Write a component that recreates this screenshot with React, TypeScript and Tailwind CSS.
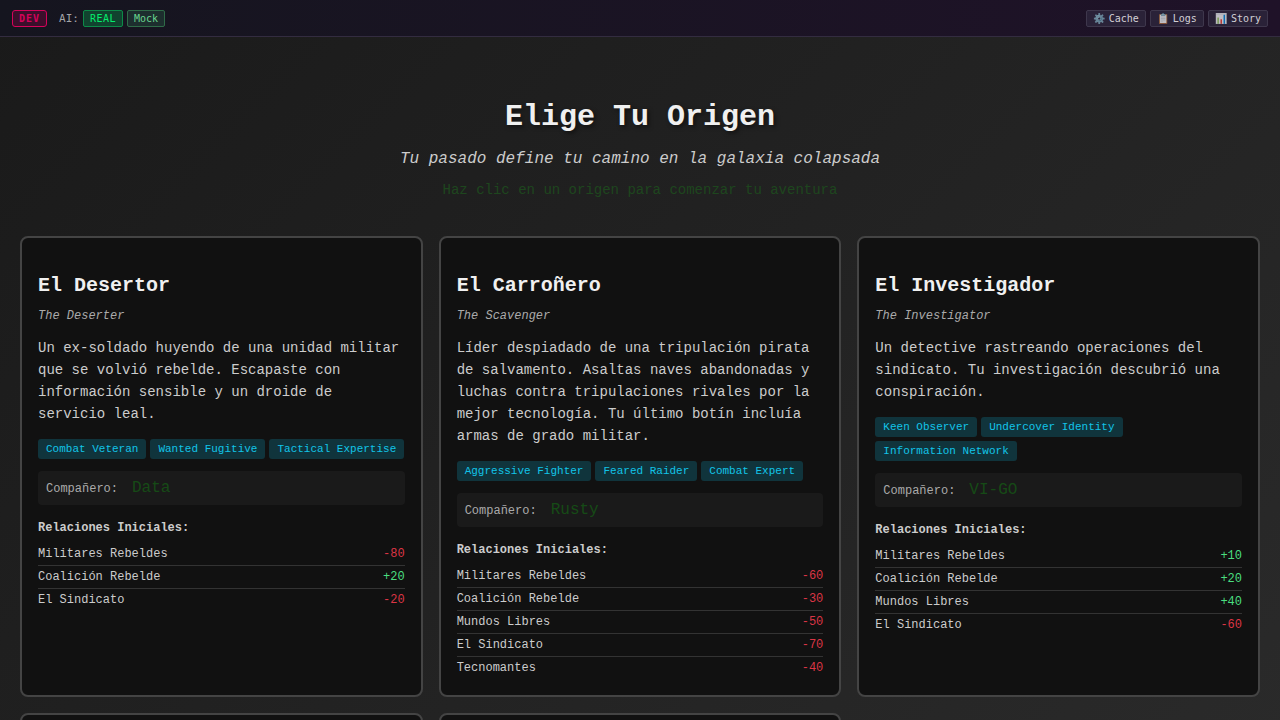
type Relation = { faction: string; value: number };

type Origin = {
  name: string;
  englishName: string;
  description: string;
  traits: string[];
  companion: string;
  relations: Relation[];
};

const origins: Origin[] = [
  {
    name: "El Desertor",
    englishName: "The Deserter",
    description:
      "Un ex-soldado huyendo de una unidad militar que se volvió rebelde. Escapaste con información sensible y un droide de servicio leal.",
    traits: ["Combat Veteran", "Wanted Fugitive", "Tactical Expertise"],
    companion: "Data",
    relations: [
      { faction: "Militares Rebeldes", value: -80 },
      { faction: "Coalición Rebelde", value: 20 },
      { faction: "El Sindicato", value: -20 },
    ],
  },
  {
    name: "El Carroñero",
    englishName: "The Scavenger",
    description:
      "Líder despiadado de una tripulación pirata de salvamento. Asaltas naves abandonadas y luchas contra tripulaciones rivales por la mejor tecnología. Tu último botín incluía armas de grado militar.",
    traits: ["Aggressive Fighter", "Feared Raider", "Combat Expert"],
    companion: "Rusty",
    relations: [
      { faction: "Militares Rebeldes", value: -60 },
      { faction: "Coalición Rebelde", value: -30 },
      { faction: "Mundos Libres", value: -50 },
      { faction: "El Sindicato", value: -70 },
      { faction: "Tecnomantes", value: -40 },
    ],
  },
  {
    name: "El Investigador",
    englishName: "The Investigator",
    description:
      "Un detective rastreando operaciones del sindicato. Tu investigación descubrió una conspiración.",
    traits: ["Keen Observer", "Undercover Identity", "Information Network"],
    companion: "VI-GO",
    relations: [
      { faction: "Militares Rebeldes", value: 10 },
      { faction: "Coalición Rebelde", value: 20 },
      { faction: "Mundos Libres", value: 40 },
      { faction: "El Sindicato", value: -60 },
    ],
  },
];

const tools = [
  { icon: "⚙️", label: "Cache" },
  { icon: "📋", label: "Logs" },
  { icon: "📊", label: "Story" },
];

function DevBar() {
  return (
    <header className="flex items-center justify-between border-b border-[#332c40] bg-linear-to-r from-[#15151f] to-[#1f1228] px-3 pt-2.5 pb-[9px] font-['DejaVu_Sans_Mono',monospace] text-[10px] leading-[13px]">
      <div className="flex items-center gap-3">
        <span className="rounded-[3px] border border-[#d5035a] bg-[#3b0f2b] px-1.5 py-px font-bold tracking-widest text-[#d5035a]">
          DEV
        </span>
        <div className="flex items-center gap-1">
          <span className="text-[11px] text-[#a3a3a8]">AI:</span>
          <button
            type="button"
            className="rounded-xs border border-[#0c8a48] bg-[#11432f] px-1.5 py-px tracking-wider text-[#05ee6d]"
          >
            REAL
          </button>
          <button
            type="button"
            className="rounded-xs border border-[#2f6b48] bg-[#1d2e2e] px-1.5 py-px text-[#69d58f]"
          >
            Mock
          </button>
        </div>
      </div>
      <div className="flex items-center gap-1">
        {tools.map((tool) => (
          <button
            key={tool.label}
            type="button"
            className="flex gap-1 rounded-xs border border-[#3e374c] bg-[#2a2238] px-1.5 py-px text-[#d2d0d5]"
          >
            <span className="opacity-70">{tool.icon}</span>
            {tool.label}
          </button>
        ))}
      </div>
    </header>
  );
}

function OriginCard({ origin }: { origin: Origin }) {
  return (
    <article className="relative rounded-lg border-2 border-[#444444] bg-[#111111] px-4 pt-[34px] pb-4">
      <h2 className="text-xl leading-7 font-bold text-[#f0f0f0]">
        <button type="button" className="cursor-pointer after:absolute after:inset-0">
          {origin.name}
        </button>
      </h2>
      <p className="mt-2 text-xs text-[#aaaaaa] italic">{origin.englishName}</p>
      <p className="mt-[13px] text-sm leading-[22px] text-[#cccccc]">{origin.description}</p>
      <ul className="mt-3.5 flex flex-wrap gap-1">
        {origin.traits.map((trait) => (
          <li
            key={trait}
            className="rounded-[3px] bg-[#10343c] px-2 py-1 text-[11px] leading-3 text-[#12c4e8]"
          >
            {trait}
          </li>
        ))}
      </ul>
      <p className="mt-3 flex items-baseline gap-3.5 rounded-sm bg-[#1a1a1a] p-2 leading-[18px]">
        <span className="text-xs leading-4 text-[#aaaaaa]">Compañero:</span>
        <span className="text-base leading-[18px] text-[#164a16]">{origin.companion}</span>
      </p>
      <h3 className="mt-4 text-xs leading-[14px] font-bold text-[#cccccc]">
        Relaciones Iniciales:
      </h3>
      <dl className="mt-2 divide-y divide-[#333333] text-xs leading-[14px] text-[#cccccc]">
        {origin.relations.map(({ faction, value }) => (
          <div key={faction} className="flex justify-between py-1">
            <dt>{faction}</dt>
            <dd className={value > 0 ? "text-[#4ade80]" : "text-[#dc3545]"}>
              {value > 0 ? `+${value}` : value}
            </dd>
          </div>
        ))}
      </dl>
    </article>
  );
}

export default function App() {
  return (
    <div className="min-h-screen bg-linear-135 from-[#1a1a1a] to-[#2d2d2d] font-['Liberation_Mono',monospace]">
      <DevBar />
      <main className="px-5 pt-[62px] pb-5">
        <div className="text-center">
          <h1 className="text-3xl font-bold text-[#f0f0f0] [text-shadow:2px_2px_4px_rgba(0,0,0,0.5)]">
            Elige Tu Origen
          </h1>
          <p className="mt-3 text-base text-[#cccccc] italic">
            Tu pasado define tu camino en la galaxia colapsada
          </p>
          <p className="mt-[9px] text-sm text-[#1e461e]">
            Haz clic en un origen para comenzar tu aventura
          </p>
        </div>
        <div className="mt-9 grid grid-cols-1 gap-4 md:grid-cols-2 lg:grid-cols-3">
          {origins.map((origin) => (
            <OriginCard key={origin.name} origin={origin} />
          ))}
          <div className="min-h-96 rounded-lg border-2 border-[#444444] bg-[#111111]" />
          <div className="min-h-96 rounded-lg border-2 border-[#444444] bg-[#111111]" />
        </div>
      </main>
    </div>
  );
}
